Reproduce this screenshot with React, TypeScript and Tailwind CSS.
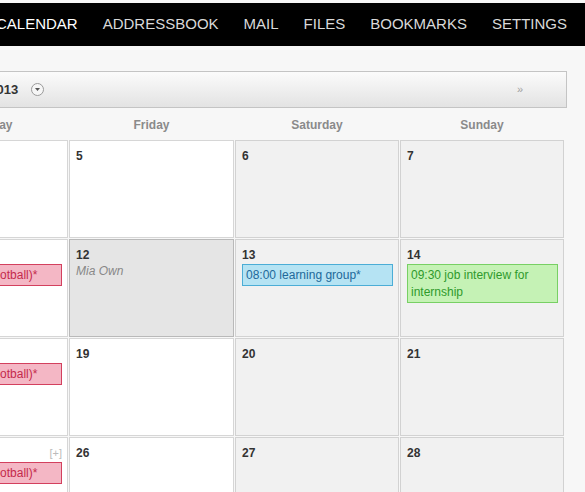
import React from 'react';

type Tone = 'pink' | 'blue' | 'green';

interface CalEvent {
  text: string;
  tone: Tone;
}

interface Day {
  date: number;
  weekend?: boolean;
  today?: boolean;
  note?: string;
  add?: boolean;
  events?: CalEvent[];
}

const toneClass: Record<Tone, string> = {
  pink: 'bg-[#f4b7c5] border-[#d3405e] text-[#c42a4c] whitespace-nowrap',
  blue: 'bg-[#b5e3f3] border-[#4badd6] text-[#22699a]',
  green: 'bg-[#c5f2b5] border-[#78d064] text-[#2f9a2c]',
};

const football: CalEvent = { text: '18:00 soccer (football)*', tone: 'pink' };

const weeks: Day[][] = [
  [{ date: 4 }, { date: 5 }, { date: 6, weekend: true }, { date: 7, weekend: true }],
  [
    { date: 11, events: [football] },
    { date: 12, today: true, note: 'Mia Own' },
    { date: 13, weekend: true, events: [{ text: '08:00 learning group*', tone: 'blue' }] },
    { date: 14, weekend: true, events: [{ text: '09:30 job interview for internship', tone: 'green' }] },
  ],
  [{ date: 18, events: [football] }, { date: 19 }, { date: 20, weekend: true }, { date: 21, weekend: true }],
  [{ date: 25, add: true, events: [football] }, { date: 26 }, { date: 27, weekend: true }, { date: 28, weekend: true }],
];

const navItems = ['CALENDAR', 'ADDRESSBOOK', 'MAIL', 'FILES', 'BOOKMARKS', 'SETTINGS'];
const dayNames = ['Thursday', 'Friday', 'Saturday', 'Sunday'];

const DayCell: React.FC<{ day: Day }> = ({ day }) => {
  const bg = day.today
    ? 'bg-[#e5e5e5] border-[#b9b9b9]'
    : day.weekend
      ? 'bg-[#f1f1f1] border-[#d2d2d2]'
      : 'bg-white border-[#d6d6d6]';
  return (
    <div className={`h-[98px] border pt-[8px] pl-[6px] pr-[5px] overflow-hidden ${bg}`}>
      <div className="flex justify-between items-center h-[15px]">
        <span className="text-[12px] leading-[15px] font-bold text-[#333]">{day.date}</span>
        {day.add && <span className="text-[11px] leading-[15px] text-[#bbb]">[+]</span>}
      </div>
      {day.note && (
        <div className="mt-px text-[12px] leading-[15px] italic text-[#888]">{day.note}</div>
      )}
      {day.events?.map((ev, i) => (
        <div
          key={i}
          className={`mt-px border px-[3px] pt-[2px] pb-px text-[12px] leading-[17px] overflow-hidden ${toneClass[ev.tone]}`}
        >
          {ev.text}
        </div>
      ))}
    </div>
  );
};

export default function App() {
  return (
    <div className="w-[585px] h-[492px] overflow-hidden bg-[#f7f7f7] pt-[3px] font-['Liberation_Sans',Arial,sans-serif]">
      <nav className="h-[43px] bg-black flex items-center gap-[25px] -ml-[4px] text-[15px]">
        {navItems.map((item) => (
          <span key={item} className={item === 'CALENDAR' ? 'text-white' : 'text-[#d9d9d9]'}>
            {item}
          </span>
        ))}
      </nav>

      <main className="-ml-[97px] w-[664px] pt-[25px]">
        <div className="h-[37px] border border-[#c4c4c4] bg-gradient-to-b from-[#fbfbfb] to-[#e3e3e3] flex items-center pl-[52px]">
          <span className="text-[13px] font-bold text-[#333]">April 2013</span>
          <span className="ml-[13px] w-[13px] h-[13px] rounded-full border border-[#9a9a9a] bg-[#f6f6f6] flex items-center justify-center">
            <svg width="7" height="5" viewBox="0 0 7 5">
              <path d="M1 1 L3.5 4 L6 1 Z" fill="#555" />
            </svg>
          </span>
          <span className="ml-auto mr-[43px] text-[11px] text-[#a0a0a0]">»</span>
        </div>

        <div className="grid grid-cols-[165px_165px_164px_164px] gap-px h-[32px] pt-px">
          {dayNames.map((name) => (
            <div key={name} className="flex items-center justify-center text-[12px] font-bold text-[#8a8a8a]">
              {name}
            </div>
          ))}
        </div>

        <div className="grid grid-cols-[165px_165px_164px_164px] gap-px">
          {weeks.flat().map((day) => (
            <DayCell key={day.date} day={day} />
          ))}
        </div>
      </main>
    </div>
  );
}
